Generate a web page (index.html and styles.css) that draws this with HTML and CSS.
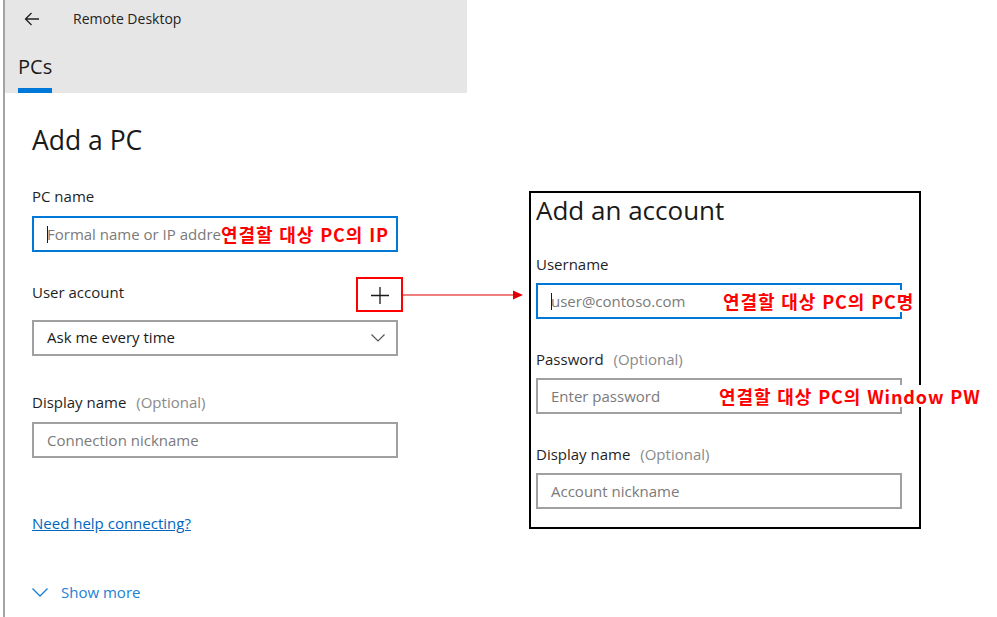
FILE: index.html
```html
<!DOCTYPE html>
<html lang="ko">
<head>
    <meta charset="UTF-8">
    <meta name="viewport" content="width=device-width, initial-scale=1.0">
    <title>Remote Desktop - Add a PC</title>
    <link rel="stylesheet" href="styles.css">
</head>
<body>
<div class="screen">
    <!-- Remote Desktop app window -->
    <div class="app">
        <div class="header">
            <div class="titlebar">
                <svg class="back" width="16" height="14" viewBox="0 0 16 14">
                    <path d="M15 7H1.5M7.5 1L1.5 7l6 6" fill="none" stroke="#222" stroke-width="1.3"/>
                </svg>
                <span class="app-name">Remote Desktop</span>
            </div>
            <div class="tab">PCs</div>
        </div>

        <div class="content">
            <h1 class="title">Add a PC</h1>

            <div class="field first">
                <label class="label">PC name</label>
                <div class="input focused">
                    <span class="caret"></span>
                    <span class="placeholder">Formal name or IP address</span>
                    <span class="note">연결할 대상 PC의 IP</span>
                </div>
            </div>

            <div class="field account-field">
                <div class="label-row">
                    <label class="label">User account</label>
                    <div class="add-btn">
                        <svg width="20" height="20" viewBox="0 0 20 20">
                            <path d="M1 10.5h18M10 2v17" stroke="#1a1a1a" stroke-width="1.3"/>
                        </svg>
                    </div>
                </div>
                <div class="input select">
                    <span class="value">Ask me every time</span>
                    <svg class="chevron" width="14" height="8" viewBox="0 0 14 8">
                        <path d="M0.5 0.5L7 7l6.5-6.5" fill="none" stroke="#555" stroke-width="1.2"/>
                    </svg>
                </div>
            </div>

            <div class="field display-field">
                <label class="label">Display name <span class="optional">(Optional)</span></label>
                <div class="input">
                    <span class="placeholder">Connection nickname</span>
                </div>
            </div>

            <a class="help-link" href="#">Need help connecting?</a>

            <div class="show-more">
                <svg width="16" height="9" viewBox="0 0 16 9">
                    <path d="M0.5 0.5L8 8l7.5-7.5" fill="none" stroke="#1a7fd6" stroke-width="1.3"/>
                </svg>
                <span>Show more</span>
            </div>
        </div>
    </div>

    <!-- Add an account dialog (captured separately) -->
    <div class="account">
        <h2 class="account-title">Add an account</h2>

        <div class="field user-field">
            <label class="label">Username</label>
            <div class="input focused">
                <span class="caret"></span>
                <span class="placeholder">user@contoso.com</span>
                <span class="note note-user">연결할 대상 PC의 PC명</span>
            </div>
        </div>

        <div class="field">
            <label class="label">Password <span class="optional">(Optional)</span></label>
            <div class="input">
                <span class="placeholder">Enter password</span>
                <span class="note note-pw">연결할 대상 PC의 Window PW</span>
            </div>
        </div>

        <div class="field">
            <label class="label">Display name <span class="optional">(Optional)</span></label>
            <div class="input">
                <span class="placeholder">Account nickname</span>
            </div>
        </div>
    </div>

    <!-- annotation arrow from the + button to the dialog -->
    <svg class="arrow" width="122" height="12" viewBox="0 0 122 12">
        <path d="M0 6H112" stroke="#e00000" stroke-width="1.2"/>
        <path d="M110 1.5L120 6l-10 4.5z" fill="#e00000"/>
    </svg>
</div>
</body>
</html>
```

FILE: styles.css
```css
body {
    margin: 0;
    background: #fff;
    font-family: "Open Sans", "Noto Sans CJK KR", sans-serif;
    color: #1f1f1f;
}
.screen {
    position: relative;
    display: flex;
    align-items: flex-start;
    width: 997px;
    height: 617px;
    overflow: hidden;
}
.app {
    margin-left: 3px;
    width: 462px;
    height: 617px;
    border-left: 2px solid #a3a3a3;
}
.header {
    background: #e6e6e6;
    height: 93px;
}
.titlebar {
    display: flex;
    align-items: center;
    height: 37px;
}
.back {
    margin-left: 19px;
}
.app-name {
    margin-left: 33px;
    font-size: 14px;
    color: #222;
}
.tab {
    display: inline-block;
    margin-left: 13px;
    margin-top: 9px;
    font-size: 20px;
    line-height: 42px;
    border-bottom: 5px solid #0078d7;
    color: #1a1a1a;
}
.content {
    padding-left: 27px;
}
.title {
    margin: 27px 0 0;
    font-size: 26.5px;
    font-weight: 400;
    line-height: 40px;
    color: #1a1a1a;
}
.field {
    width: 366px;
}
.label {
    display: block;
    font-size: 15px;
    line-height: 20px;
    margin-bottom: 10px;
}
.optional {
    margin-left: 6px;
    color: #8a8a8a;
}
.input {
    position: relative;
    display: flex;
    align-items: center;
    box-sizing: border-box;
    height: 36px;
    padding-left: 13px;
    border: 2px solid #a0a0a0;
    font-size: 15px;
}
.input.focused {
    border-color: #0078d7;
}
.placeholder {
    color: #7a7a7a;
    white-space: nowrap;
}
.caret {
    position: absolute;
    left: 13px;
    top: 8px;
    width: 1px;
    height: 17px;
    background: #1a1a1a;
}
.note {
    position: absolute;
    top: 50%;
    transform: translateY(-50%);
    left: 187px;
    padding-right: 1px;
    background: #fff;
    color: #ff0000;
    font-family: "Noto Sans CJK KR", sans-serif;
    font-size: 18px;
    font-weight: 700;
    letter-spacing: 0.9px;
    line-height: 22px;
    white-space: nowrap;
}
.note-user {
    left: 185px;
}
.note-pw {
    left: 181px;
}
.first {
    margin-top: 26px;
}
.account-field {
    margin-top: 25px;
}
.label-row {
    display: flex;
    align-items: center;
    justify-content: space-between;
    height: 35px;
    margin-bottom: 8px;
}
.label-row .label {
    margin-bottom: 0;
    padding-bottom: 5px;
}
.add-btn {
    display: flex;
    align-items: center;
    justify-content: center;
    box-sizing: border-box;
    width: 47px;
    height: 35px;
    margin-right: -5px;
    border: 2px solid #ff0000;
}
.select {
    justify-content: space-between;
    padding-right: 11px;
}
.value {
    color: #1a1a1a;
    padding-bottom: 2px;
}
.display-field {
    margin-top: 36px;
}
.help-link {
    display: inline-block;
    margin-top: 55px;
    font-size: 15px;
    line-height: 20px;
    color: #0067c0;
}
.show-more {
    display: flex;
    align-items: center;
    gap: 13px;
    margin-top: 48px;
    font-size: 15px;
    line-height: 20px;
    color: #1a7fd6;
}
.account {
    box-sizing: border-box;
    margin-top: 191px;
    margin-left: 62px;
    width: 392px;
    height: 338px;
    padding-left: 5px;
    border: 2px solid #000;
}
.account-title {
    margin: 0;
    font-size: 26px;
    font-weight: 400;
    line-height: 34px;
    color: #1a1a1a;
}
.account .field {
    margin-top: 30px;
}
.account .label {
    margin-bottom: 9px;
}
.account .user-field {
    margin-top: 27px;
}
.arrow {
    position: absolute;
    left: 403px;
    top: 289px;
}
```
